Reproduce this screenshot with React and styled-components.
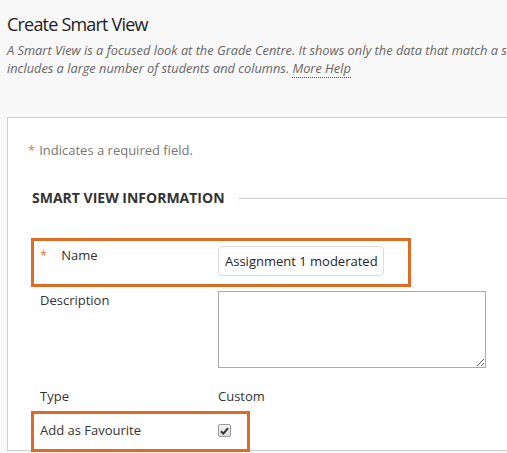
import styled, { createGlobalStyle } from "styled-components";

const GlobalStyle = createGlobalStyle`
  html, body {
    margin: 0;
    padding: 0;
    overflow: hidden;
    background: #f8f8f8;
  }
  body {
    font-family: "Open Sans", "Liberation Sans", sans-serif;
    color: #333;
  }
`;

const Page = styled.div`
  width: 820px;
  height: 453px;
  padding: 12px 0 0 7px;
  box-sizing: border-box;
`;

const Title = styled.h1`
  margin: 0;
  font-size: 18px;
  font-weight: 400;
  letter-spacing: -0.8px;
  line-height: 24px;
  color: #222;
`;

const Intro = styled.p`
  margin: 5px 0 0;
  font-size: 12.8px;
  font-style: italic;
  line-height: 18px;
  color: #666;
  white-space: nowrap;
`;

const HelpLink = styled.a`
  color: #666;
  text-decoration: none;
  border-bottom: 1px dotted #555;
`;

const Panel = styled.div`
  margin-top: 40px;
  background: #fff;
  border: 1px solid #cfcfcf;
  box-sizing: border-box;
  padding: 23px 0 0 20px;
  height: 334px;
`;

const Required = styled.p`
  margin: 0;
  font-size: 13px;
  line-height: 18px;
  color: #777;
`;

const Star = styled.span`
  color: #f0782d;
  margin-right: ${(p) => p.$gap || "4px"};
`;

const SectionHead = styled.div`
  display: flex;
  align-items: center;
  gap: 14px;
  margin-top: 29px;
  padding-left: 4px;
`;

const SectionTitle = styled.h2`
  margin: 0;
  font-size: 14px;
  font-weight: 700;
  line-height: 20px;
  color: #333;
  white-space: nowrap;
`;

const Rule = styled.div`
  flex: 1;
  height: 1px;
  background: #cfcfcf;
`;

const Fields = styled.div`
  display: flex;
  flex-direction: column;
  margin-top: 30px;
  margin-left: 3px;
`;

const Row = styled.div`
  display: grid;
  grid-template-columns: 178px auto;
  align-items: start;
  box-sizing: border-box;
  width: ${(p) => p.$width || "auto"};
  border: 3px solid ${(p) => (p.$mark ? "#df6a24" : "transparent")};
  padding: ${(p) => p.$pad || "0"};
  padding-left: 6px;
  font-size: 13px;
  line-height: 18px;
  color: #333;
`;

const TextInput = styled.input`
  box-sizing: border-box;
  width: 166px;
  height: 30px;
  padding: 0 6px;
  border: 1px solid #dcdcdc;
  border-radius: 4px;
  font-family: inherit;
  font-size: 13px;
  color: #262626;
  background: #fff;
  outline: none;
`;

const TextArea = styled.textarea`
  box-sizing: border-box;
  width: 268px;
  height: 77px;
  border: 1px solid #aaa;
  margin: 0;
  display: block;
  font-family: inherit;
  font-size: 13px;
  background: #fff;
`;

const Box = styled.span`
  display: inline-flex;
  align-items: center;
  justify-content: center;
  box-sizing: border-box;
  width: 13px;
  height: 13px;
  margin-top: 3px;
  border: 1px solid #9a9a9a;
  border-radius: 2px;
  background: linear-gradient(#f2f2f2, #dcdcdc);
`;

function CheckBox() {
  return (
    <Box>
      <svg width="9" height="8" viewBox="0 0 9 8">
        <path d="M1 4.2 L3.4 6.6 L8 1.2" fill="none" stroke="#333" strokeWidth="2" />
      </svg>
    </Box>
  );
}

export default function App() {
  return (
    <>
      <GlobalStyle />
      <Page>
        <Title>Create Smart View</Title>
        <Intro>
          A Smart View is a focused look at the Grade Centre. It shows only the data that match a set of criteria. This is useful when the Grade Centre
          <br />
          includes a large number of students and columns. <HelpLink href="#">More Help</HelpLink>
        </Intro>
        <Panel>
          <Required>
            <Star>*</Star>Indicates a required field.
          </Required>
          <SectionHead>
            <SectionTitle>SMART VIEW INFORMATION</SectionTitle>
            <Rule />
          </SectionHead>
          <Fields>
            <Row $mark $width="380px" $pad="5px 0 8px">
              <div>
                <Star $gap="14px">*</Star>Name
              </div>
              <TextInput defaultValue="Assignment 1 moderated assignment" />
            </Row>
            <Row $pad="1px 0 0">
              <div>Description</div>
              <TextArea />
            </Row>
            <Row $pad="13px 0 3px">
              <div>Type</div>
              <div>Custom</div>
            </Row>
            <Row $mark $width="219px" $pad="7px 0 10px">
              <div>Add as Favourite</div>
              <CheckBox />
            </Row>
          </Fields>
        </Panel>
      </Page>
    </>
  );
}
